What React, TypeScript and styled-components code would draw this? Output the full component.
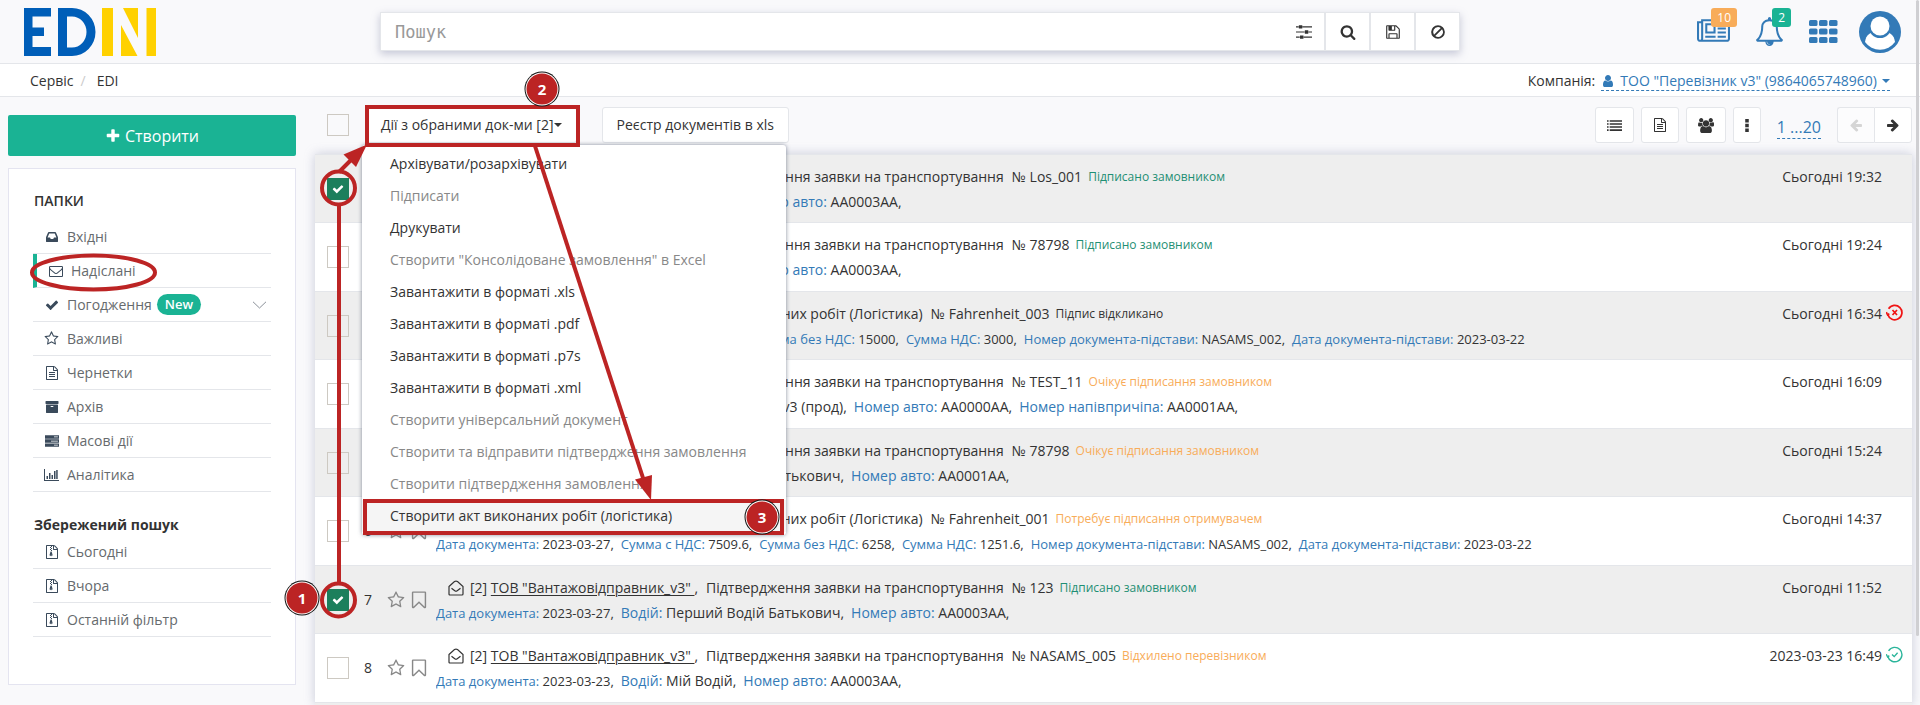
import React, { useState } from 'react';
import styled, { createGlobalStyle, css } from 'styled-components';

const color = {
  page: '#f9f9fb',
  line: '#e4e6ea',
  text: '#333333',
  muted: '#666a6d',
  icon: '#3a4a5b',
  link: '#337ab7',
  green: '#1ab394',
  greenText: '#1f8f74',
  orange: '#f8ac59',
  mark: '#bc2424',
};

const GlobalStyle = createGlobalStyle`
  *, *::before, *::after { box-sizing: border-box; }
  body {
    margin: 0;
    background: ${color.page};
    color: ${color.text};
    font: 14px/20px "Open Sans", "Noto Sans", sans-serif;
    overflow: hidden;
  }
  button, input { font: inherit; color: inherit; }
  button { cursor: pointer; }
  a { color: inherit; text-decoration: none; }
  ul { list-style: none; margin: 0; padding: 0; }
`;

/* ---------- icons ---------- */

const glyphs = {
  plus: 'M1600 736v192q0 40-28 68t-68 28h-416v416q0 40-28 68t-68 28h-192q-40 0-68-28t-28-68v-416h-416q-40 0-68-28t-28-68v-192q0-40 28-68t68-28h416v-416q0-40 28-68t68-28h192q40 0 68 28t28 68v416h416q40 0 68 28t28 68z',
  search: 'M1216 832q0-185-131.5-316.5t-316.5-131.5-316.5 131.5-131.5 316.5 131.5 316.5 316.5 131.5 316.5-131.5 131.5-316.5zm512 832q0 52-38 90t-90 38q-54 0-90-38l-343-342q-179 124-399 124-143 0-273.5-55.5t-225-150-150-225-55.5-273.5 55.5-273.5 150-225 225-150 273.5-55.5 273.5 55.5 225 150 150 225 55.5 273.5q0 220-124 399l343 343q37 37 37 90z',
  envelope: 'M1664 1504v-768q-32 36-69 66-268 206-426 338-51 43-83 67t-86.5 48.5-102.5 24.5h-2q-48 0-102.5-24.5t-86.5-48.5-83-67q-158-132-426-338-37-30-69-66v768q0 13 9.5 22.5t22.5 9.5h1472q13 0 22.5-9.5t9.5-22.5zm0-1051v-24.5l-.5-13-3-12.5-5.5-9-9-7.5-14-2.5h-1472q-13 0-22.5 9.5t-9.5 22.5q0 168 147 284 193 152 401 317 6 5 35 29.5t46 37.5 44.5 31.5 50.5 27.5 43 9h2q20 0 43-9t50.5-27.5 44.5-31.5 46-37.5 35-29.5q208-165 401-317 54-43 100.5-115.5t46.5-131.5zm128-37v1088q0 66-47 113t-113 47h-1472q-66 0-113-47t-47-113v-1088q0-66 47-113t113-47h1472q66 0 113 47t47 113z',
  check: 'M1671 566q0 40-28 68l-724 724-136 136q-28 28-68 28t-68-28l-136-136-362-362q-28-28-28-68t28-68l136-136q28-28 68-28t68 28l294 295 656-657q28-28 68-28t68 28l136 136q28 28 28 68z',
  star: 'M1201 1004l306-297-422-62-189-382-189 382-422 62 306 297-73 421 378-199 377 199zm527-357q0 22-26 48l-363 354 86 500q1 7 1 20 0 50-41 50-19 0-40-12l-449-236-449 236q-22 12-40 12-21 0-31.5-14.5t-10.5-35.5q0-6 2-20l86-500-364-354q-25-27-25-48 0-37 56-46l502-73 225-455q19-41 49-41t49 41l225 455 502 73q56 9 56 46z',
  file: 'M1596 380q28 28 48 76t20 88v1152q0 40-28 68t-68 28h-1344q-40 0-68-28t-28-68v-1600q0-40 28-68t68-28h896q40 0 88 20t76 48zm-444-244v376h376q-10-29-22-41l-313-313q-12-12-41-22zm384 1528v-1024h-416q-40 0-68-28t-28-68v-416h-768v1536h1280zm-1024-864q0-14 9-23t23-9h704q14 0 23 9t9 23v64q0 14-9 23t-23 9h-704q-14 0-23-9t-9-23v-64zm736 224q14 0 23 9t9 23v64q0 14-9 23t-23 9h-704q-14 0-23-9t-9-23v-64q0-14 9-23t23-9h704zm0 256q14 0 23 9t9 23v64q0 14-9 23t-23 9h-704q-14 0-23-9t-9-23v-64q0-14 9-23t23-9h704z',
  zip: 'M1596 380q28 28 48 76t20 88v1152q0 40-28 68t-68 28h-1344q-40 0-68-28t-28-68v-1600q0-40 28-68t68-28h896q40 0 88 20t76 48zm-444-244v376h376q-10-29-22-41l-313-313q-12-12-41-22zm384 1528v-1024h-416q-40 0-68-28t-28-68v-416h-128v128h-128v-128h-512v1536h1280zm-896-1408h128v128h-128zm128 128h128v128h-128zm-128 128h128v128h-128zm128 128h128v128h-128zm-60 192h136l120 400q10 36 10 62 0 130-198 130t-198-130q0-30 10-62zm68 400q-80 0-80 60t80 60 80-60-80-60z',
  archive: 'M1088 832q0-26-19-45t-45-19h-256q-26 0-45 19t-19 45 19 45 45 19h256q26 0 45-19t19-45zm576-192v960q0 26-19 45t-45 19h-1408q-26 0-45-19t-19-45v-960q0-26 19-45t45-19h1408q26 0 45 19t19 45zm64-448v256q0 26-19 45t-45 19h-1536q-26 0-45-19t-19-45v-256q0-26 19-45t45-19h1536q26 0 45 19t19 45z',
  inbox: 'M1151 960h316q-1-3-2.5-8.5t-2.5-7.5l-212-496h-708l-212 496q-1 2-2.5 7.5t-2.5 8.5h316l95 192h320zm513 30v482q0 26-19 45t-45 19h-1408q-26 0-45-19t-19-45v-482q0-62 25-123l238-552q10-25 36.5-42t52.5-17h832q26 0 52.5 17t36.5 42l238 552q25 61 25 123z',
  server: 'M0 160h1792v440h-1792zM1152 330v100h500v-100zM0 680h1792v440h-1792zM768 850v100h884v-100zM0 1200h1792v440h-1792zM1152 1370v100h500v-100z',
  chart: 'M0 128h128v1408h1792v128h-1920zM320 1024h192v384h-192zM640 640h192v768h-192zM960 896h192v512h-192zM1280 384h192v1024h-192zM1560 256h192v1152h-192z',
  arrow: 'M1600 960q0 54-37 91l-651 651q-39 37-91 37-51 0-90-37l-75-75q-38-38-38-91t38-91l293-293h-704q-52 0-84.5-37.5t-32.5-90.5v-128q0-53 32.5-90.5t84.5-37.5h704l-293-294q-38-36-38-90t38-90l75-75q38-38 90-38 53 0 91 38l651 651q37 35 37 90z',
  user: 'M1536 1399q0 109-62.5 187t-150.5 78h-854q-88 0-150.5-78t-62.5-187q0-85 8.5-160.5t31.5-152 58.5-131 94-89 134.5-34.5q131 128 313 128t313-128q76 0 134.5 34.5t94 89 58.5 131 31.5 152 8.5 160.5zm-256-887q0 159-112.5 271.5t-271.5 112.5-271.5-112.5-112.5-271.5 112.5-271.5 271.5-112.5 271.5 112.5 112.5 271.5z',
  users: 'M529 896q-162 5-265 128h-134q-82 0-138-40.5t-56-118.5q0-353 124-353 6 0 43.5 21t97.5 42.5 119 21.5q67 0 133-23-5 37-5 66 0 159 90 287zm1071 637q0 120-73 189.5t-194 69.5h-874q-121 0-194-69.5t-73-189.5q0-53 3.5-103.5t14-109 26.5-108.5 43-97.5 62-81 85.5-53.5 111.5-20q10 0 43 21.5t73 48 107 48 135 21.5 135-21.5 107-48 73-48 43-21.5q61 0 111.5 20t85.5 53.5 62 81 43 97.5 26.5 108.5 14 109 3.5 103.5zm-1024-1277q0 106-75 181t-181 75-181-75-75-181 75-181 181-75 181 75 75 181zm704 384q0 159-112.5 271.5t-271.5 112.5-271.5-112.5-112.5-271.5 112.5-271.5 271.5-112.5 271.5 112.5 112.5 271.5zm576 225q0 78-56 118.5t-138 40.5h-134q-103-123-265-128 90-128 90-287 0-29-5-66 66 23 133 23 59 0 119-21.5t97.5-42.5 43.5-21q124 0 124 353zm-128-609q0 106-75 181t-181 75-181-75-75-181 75-181 181-75 181 75 75 181z',
  bell: 'M912 1696q0-16-16-16-59 0-101.5-42.5t-42.5-101.5q0-16-16-16t-16 16q0 73 51.5 124.5t124.5 51.5q16 0 16-16zm-666-288h1300q-266-300-266-832 0-51-24-105t-69-103-121.5-80.5-169.5-31.5-169.5 31.5-121.5 80.5-69 103-24 105q0 532-266 832zm1482 0q0 52-38 90t-90 38h-448q0 106-75 181t-181 75-181-75-75-181h-448q-52 0-90-38t-38-90q50-42 91-88t85-119.5 74.5-158.5 50-206 19.5-260q0-152 117-282.5t307-158.5q-8-19-8-39 0-40 28-68t68-28 68 28 28 68q0 20-8 39 190 28 307 158.5t117 282.5q0 139 19.5 260t50 206 74.5 158.5 85 119.5 91 88z',
  news: 'M1024 512h-384v384h384v-384zm128 640v128h-640v-128h640zm0-768v640h-640v-640h640zm640 768v128h-512v-128h512zm0-256v128h-512v-128h512zm0-256v128h-512v-128h512zm0-256v128h-512v-128h512zm-1536 960v-960h-128v960q0 26 19 45t45 19 45-19 19-45zm1664 0v-1088h-1536v1088q0 33-11 64h1483q26 0 45-19t19-45zm128-1216v1216q0 80-56 136t-136 56h-1664q-80 0-136-56t-56-136v-1088h256v-128h1792z',
  save: 'M512 1536h768v-384h-768v384zm896 0h128v-896q0-14-10-38.5t-20-34.5l-281-281q-10-10-34-20t-39-10v416q0 40-28 68t-68 28h-576q-40 0-68-28t-28-68v-416h-128v1280h128v-416q0-40 28-68t68-28h832q40 0 68 28t28 68v416zm-384-928v-320q0-13-9.5-22.5t-22.5-9.5h-192q-13 0-22.5 9.5t-9.5 22.5v320q0 13 9.5 22.5t22.5 9.5h192q13 0 22.5-9.5t9.5-22.5zm640 32v928q0 40-28 68t-68 28h-1344q-40 0-68-28t-28-68v-1344q0-40 28-68t68-28h928q40 0 88 20t76 48l280 280q28 28 48 76t20 88z',
  bookmark: 'M1408 256h-1024v1242l423-406 89-85 89 85 423 406v-1242zm12-128q23 0 44 9 33 13 52.5 41t19.5 62v1289q0 34-19.5 62t-52.5 41q-19 8-44 8-48 0-83-32l-441-424-441 424q-36 33-83 33-23 0-44-9-33-13-52.5-41t-19.5-62v-1289q0-34 19.5-62t52.5-41q21-9 44-9h1048z',
  list: 'M0 256h192v192h-192zM320 256h1472v192h-1472zM0 620h192v192h-192zM320 620h1472v192h-1472zM0 984h192v192h-192zM320 984h1472v192h-1472zM0 1348h192v192h-192zM320 1348h1472v192h-1472z',
  dots: 'M704 192h384v384h-384zM704 704h384v384h-384zM704 1216h384v384h-384z',
  sliders: 'M0 260h300v128h-300zM720 260h1072v128h-1072zM320 130h384v384h-384zM0 832h960v128h-960zM1400 832h392v128h-392zM990 704h384v384h-384zM0 1404h420v128h-420zM860 1404h932v128h-932zM450 1276h384v384h-384z',
  ban: 'M896 128a768 768 0 1 0 0 1536a768 768 0 1 0 0-1536zM896 348a548 548 0 0 1 310 96l-762 762a548 548 0 0 1 452-858zM1348 588a548 548 0 0 1-762 762z',
};

type Glyph = keyof typeof glyphs;
const wide: Partial<Record<Glyph, string>> = {
  news: '0 0 2048 1792',
  users: '-64 0 1920 1792',
  chart: '0 0 1920 1792',
};

const Svg = styled.svg<{ $w: number; $h?: number }>`
  width: ${(p) => p.$w}px;
  height: ${(p) => p.$h ?? p.$w}px;
  flex: none;
  display: block;
  fill: currentColor;
`;

const Icon = ({ name, size = 14 }: { name: Glyph; size?: number }) => {
  const box = wide[name] ?? '0 0 1792 1792';
  const width = Math.round((size * Number(box.split(' ')[2])) / 1792);
  return (
    <Svg $w={width} $h={size} viewBox={box} aria-hidden="true">
      <path fillRule="evenodd" d={glyphs[name]} />
    </Svg>
  );
};

const ArrowLeft = styled.span`
  display: block;
  transform: scaleX(-1);
`;

const Caret = styled.span`
  display: inline-block;
  border: 4px solid transparent;
  border-top-color: currentColor;
  border-bottom: 0;
`;

const Logo = () => (
  <Svg $w={132} $h={48} viewBox="0 0 132 48" role="img" aria-label="EDIN">
    <g fill="#005eb8">
      <path d="M0 0h27v8.500H8.500v11H20v8.500H8.500V39H27v9H0z" />
      <path fillRule="evenodd" d="M34 0h14a23.500 24 0 0 1 0 48H34zM43 8.500v31h5a14.500 15.500 0 0 0 0-31z" />
    </g>
    <g fill="#ffd100">
      <path d="M78 0h11v48H78zM99 0h15v30zM97 17l16.500 31H97zM122.500 0H132v48h-9.500z" />
    </g>
  </Svg>
);

const AppsIcon = () => (
  <Svg $w={29} $h={23} viewBox="0 0 29 23" aria-hidden="true">
    {[0, 8.500, 17].map((y) => [0, 10, 20].map((x) => <rect key={`${x}-${y}`} x={x} y={y} width="8.500" height="6" rx="1.500" />))}
  </Svg>
);

const Avatar = () => (
  <Svg $w={42} viewBox="0 0 42 42" aria-hidden="true">
    <circle cx="21" cy="21" r="21" />
    <path d="M6 31C7 24 11 20 21 20S35 24 36 31A18.500 18.500 0 0 1 6 31z" fill="#fff" />
    <circle cx="21" cy="15.500" r="11.500" />
    <circle cx="21" cy="15" r="9.500" fill="#fff" />
  </Svg>
);

const OpenEnvelope = () => (
  <Svg $w={16} viewBox="0 0 16 16" aria-hidden="true">
    <path d="M1 6.500L6.500 1.600Q8 .6 9.500 1.600L15 6.500V14q0 1-1 1H2q-1 0-1-1zM3.500 8.200L6.800 10.800Q8 11.600 9.200 10.800L12.500 8.200" fill="none" stroke="currentColor" strokeWidth="1.200" />
  </Svg>
);

const StateIcon = ({ ok }: { ok: boolean }) => (
  <Svg $w={17} viewBox="0 0 17 17" role="img" aria-label={ok ? 'Прийнято' : 'Відхилено'}>
    <g fill="none" stroke={ok ? '#2bb59b' : '#f01414'} strokeWidth={ok ? 1.4 : 1.7}>
      <path d="M1.800 10.500A7.200 7.200 0 1 0 2.600 4.800" />
      <path d="M.3 8.200L1.600 11L3.300 9.600" />
      <path d={ok ? 'M6 8.500L8.200 10.600L11.600 6.800' : 'M6.500 6L11 11M11 6L6.500 11'} />
    </g>
  </Svg>
);

/* ---------- header ---------- */

const Page = styled.div`
  position: relative;
  display: flex;
  flex-direction: column;
  height: 100vh;
  overflow: hidden;
`;

const Header = styled.header`
  display: grid;
  grid-template-columns: 356px 1fr 460px;
  align-items: center;
  height: 64px;
  padding-left: 24px;
  border-bottom: 1px solid ${color.line};
`;

const SearchBar = styled.form`
  display: flex;
  height: 39px;
  background: #fff;
  border: 1px solid ${color.line};
  box-shadow: 0 3px 8px rgba(120, 125, 160, 0.4);
`;

const SearchInput = styled.input`
  flex: 1;
  min-width: 0;
  padding: 0 14px;
  border: 0;
  outline: 0;
  background: none;
  font: 17px/24px "DejaVu Sans Mono", monospace;
  &::placeholder { color: #999; opacity: 1; }
`;

const SearchButton = styled.button<{ $divided?: boolean }>`
  display: grid;
  place-items: center;
  width: ${(p) => (p.$divided ? 45 : 40)}px;
  padding: 0;
  border: 0;
  border-left: ${(p) => (p.$divided ? `2px solid ${color.line}` : '0')};
  background: none;
`;

const HeaderTools = styled.div`
  display: flex;
  justify-content: flex-end;
  align-items: center;
  height: 63px;
  padding-right: 19px;
  color: ${color.link};
`;

const ToolButton = styled.button<{ $gap: number }>`
  position: relative;
  padding: 0;
  border: 0;
  margin-left: ${(p) => p.$gap}px;
  background: none;
  color: inherit;
`;

const Count = styled.span<{ $tone: string }>`
  position: absolute;
  top: -9px;
  right: -7px;
  padding: 0 6px;
  border-radius: 3px;
  background: ${(p) => p.$tone};
  color: #fff;
  font-size: 12px;
  line-height: 19px;
`;

const TopBar = styled.div`
  display: flex;
  align-items: center;
  justify-content: space-between;
  height: 33px;
  padding: 2px 30px 0;
  background: #fff;
  border-bottom: 1px solid ${color.line};
`;

const Crumbs = styled.nav`
  display: flex;
  gap: 7px;
  a + span { color: #ccc; padding-right: 4px; }
`;

const Company = styled.div`
  display: flex;
  align-items: center;
  gap: 6px;
`;

const CompanyLink = styled.a`
  display: flex;
  align-items: center;
  gap: 5px;
  color: ${color.link};
  border-bottom: 1px dashed ${color.link};
  line-height: 18px;
`;

/* ---------- sidebar ---------- */

const Body = styled.div`
  display: flex;
  flex: 1;
  min-height: 0;
`;

const Sidebar = styled.aside`
  display: flex;
  flex-direction: column;
  gap: 12px;
  flex: none;
  width: 296px;
  padding: 18px 0 20px 8px;
`;

const CreateButton = styled.button`
  display: flex;
  align-items: center;
  justify-content: center;
  gap: 4px;
  height: 41px;
  border: 0;
  border-radius: 2px;
  background: ${color.green};
  color: #fff;
  font-size: 16px;
`;

const Panel = styled.section`
  flex: 1;
  padding: 22px 24px;
  background: #fff;
  border: 1px solid #e4e4f0;
`;

const Heading = styled.h2<{ $strong?: boolean }>`
  margin: ${(p) => (p.$strong ? '23px 0 0' : '0 0 9px')};
  padding-left: 1px;
  font-size: 14px;
  line-height: 20px;
  font-weight: ${(p) => (p.$strong ? 700 : 600)};
`;

const NavLink = styled.a<{ $active?: boolean }>`
  display: flex;
  align-items: center;
  height: 34px;
  padding-left: 8px;
  border-bottom: 1px solid ${color.line};
  border-left: ${(p) => (p.$active ? `4px solid ${color.green}` : '0')};
  color: ${color.muted};
`;

const NavIcon = styled.span`
  display: grid;
  place-items: center;
  width: 21px;
  margin-right: 5px;
  color: ${color.icon};
`;

const NewBadge = styled.span`
  margin-left: 5px;
  padding: 0 8px;
  border-radius: 11px;
  background: ${color.green};
  color: #fff;
  font-weight: 600;
  font-size: 13px;
  line-height: 21px;
`;

const Chevron = styled(Svg)`
  margin: 0 4px 0 auto;
`;

/* ---------- list ---------- */

const Main = styled.main`
  display: flex;
  flex-direction: column;
  flex: 1;
  min-width: 0;
  padding: 10px 8px 0 19px;
`;

const Toolbar = styled.div`
  display: flex;
  align-items: center;
  height: 36px;
  margin-bottom: 11px;
  padding-left: 12px;
`;

const boxed = css`
  display: flex;
  align-items: center;
  justify-content: center;
  height: 36px;
  border: 1px solid ${color.line};
  border-radius: 3px;
  background: #fff;
`;

const Button = styled.button<{ $icon?: boolean }>`
  ${boxed}
  padding: 0 ${(p) => (p.$icon ? 11 : 14)}px;
  white-space: nowrap;
`;

const MenuAnchor = styled.div`
  position: relative;
  margin: 0 25px 0 17px;
`;

const Menu = styled.ul`
  position: absolute;
  z-index: 2;
  top: 38px;
  left: -4px;
  width: 424px;
  padding: 3px 0;
  border-radius: 3px;
  background: #fff;
  box-shadow: 0 0 4px rgba(86, 96, 117, 0.7);
`;

const MenuItem = styled.button<{ $current?: boolean }>`
  display: block;
  width: 100%;
  height: 32px;
  padding: 0 28px;
  border: 0;
  background: ${(p) => (p.$current ? '#f5f5f5' : 'none')};
  text-align: left;
  &:disabled { color: #888; }
`;

const Actions = styled.div`
  display: flex;
  align-items: center;
  gap: 7px;
  margin-left: auto;
`;

const PageLink = styled.a`
  margin: 5px 9px 0 9px;
  color: ${color.link};
  border-bottom: 1px dashed ${color.link};
  font-size: 16px;
  line-height: 22px;
`;

const Pager = styled.div`
  display: flex;
  button:first-child { border-radius: 3px 0 0 3px; border-right: 0; }
  button:last-child { border-radius: 0 3px 3px 0; }
  button:disabled { color: #d5d5d5; background: #fcfcfd; }
`;

const TableWrap = styled.div`
  flex: 1;
  background: #eee;
  box-shadow: 0 0 10px rgba(130, 135, 170, 0.4);
`;

const Table = styled.table`
  width: 100%;
  table-layout: fixed;
  border-collapse: collapse;
  border-bottom: 1px solid ${color.line};
`;

const Row = styled.tr`
  height: 69px;
  background: #fff;
  &:nth-child(odd) { height: 68px; background: #eee; }
  td { padding: 0; border-top: 1px solid ${color.line}; }
`;

const Col = styled.col<{ $w?: number }>`
  width: ${(p) => (p.$w ? `${p.$w}px` : 'auto')};
`;

const CheckCell = styled.td`
  && { padding-left: 12px; }
`;

const Content = styled.td`
  vertical-align: top;
  white-space: nowrap;
  overflow: hidden;
`;

const Title = styled.div`
  display: flex;
  align-items: center;
  gap: 6px;
  height: 25px;
  margin-top: 9px;
  padding-left: 12px;
`;

const Subject = styled.span`
  display: flex;
  gap: 8px;
`;

const Sender = styled.span`
  white-space: pre;
`;

const Partner = styled.a`
  text-decoration: underline;
  text-underline-offset: 2px;
`;

const Status = styled.span<{ $tone: string }>`
  color: ${(p) => p.$tone};
  font-size: 12px;
`;

const Fields = styled.div`
  display: flex;
  align-items: center;
  gap: 7px;
  height: 25px;
`;

const Field = styled.span<{ $small?: boolean }>`
  font-size: ${(p) => (p.$small ? 13 : 14)}px;
  white-space: pre;
  b { font-weight: 400; color: ${color.link}; }
`;

const Marks = styled.div`
  display: flex;
  align-items: center;
  gap: 4px;
  color: #888;
`;

const MarkButton = styled.button`
  padding: 0;
  border: 0;
  background: none;
  color: inherit;
`;

const DateCell = styled.td`
  vertical-align: top;
  text-align: right;
  white-space: nowrap;
  div { line-height: 25px; padding: 9px 30px 0 0; position: relative; }
  svg { position: absolute; right: 9px; top: 12px; }
`;

const CheckLabel = styled.label`
  position: relative;
  display: block;
  width: 22px;
  height: 22px;
  input {
    appearance: none;
    display: block;
    width: 22px;
    height: 22px;
    margin: 0;
    border: 1px solid #cdc9c2;
  }
  input:checked { background: #1c7f5c; border-color: #1c7f5c; }
  svg { position: absolute; top: 5px; left: 5px; color: #fff; pointer-events: none; }
`;

const Checkbox = ({ label, initial = false }: { label: string; initial?: boolean }) => {
  const [on, setOn] = useState(initial);
  return (
    <CheckLabel>
      <input type="checkbox" aria-label={label} checked={on} onChange={() => setOn(!on)} />
      {on && <Icon name="check" size={12} />}
    </CheckLabel>
  );
};

/* ---------- callouts over the page ---------- */

const Overlay = styled.svg`
  position: absolute;
  z-index: 3;
  top: 0;
  left: 0;
  width: 800px;
  height: 705px;
  pointer-events: none;
  fill: none;
  stroke: ${color.mark};
  stroke-width: 4;
  text {
    fill: #fff;
    stroke: none;
    font: 700 15px "Open Sans", sans-serif;
    text-anchor: middle;
  }
`;

const Step = ({ x, y, n }: { x: number; y: number; n: number }) => (
  <g>
    <circle cx={x} cy={y} r="17.500" fill="#111" stroke="none" />
    <circle cx={x} cy={y} r="16.500" fill="#fff" stroke="none" />
    <circle cx={x} cy={y} r="15.500" fill={color.mark} stroke="none" />
    <text x={x} y={y + 6}>{n}</text>
  </g>
);

const Callouts = () => (
  <Overlay viewBox="0 0 800 705">
    <ellipse cx="93.500" cy="272.500" rx="61.500" ry="17" />
    <circle cx="338.500" cy="188" r="16.500" />
    <circle cx="338.500" cy="600" r="16.500" />
    <path d="M339 205V583M339 172L352 159" />
    <path d="M367 144.500L343.500 154.500L356 167z" fill={color.mark} stroke="none" />
    <path d="M535 146L644 481" />
    <path d="M651 500L635 479.500L652 475z" fill={color.mark} stroke="none" />
    <rect x="367" y="107" width="211" height="38" />
    <rect x="365" y="501" width="417" height="32" />
    <Step x={302} y={598} n={1} />
    <Step x={542} y={89} n={2} />
    <Step x={762} y={517} n={3} />
  </Overlay>
);

const ScrollThumb = styled.div`
  position: absolute;
  top: 0;
  right: 1px;
  width: 3px;
  height: 636px;
  border-radius: 2px;
  background: #cfcfd2;
`;

/* ---------- data ---------- */

const folders: { icon: Glyph; label: string; active?: boolean; fresh?: boolean }[] = [
  { icon: 'inbox', label: 'Вхідні' },
  { icon: 'envelope', label: 'Надіслані', active: true },
  { icon: 'check', label: 'Погодження', fresh: true },
  { icon: 'star', label: 'Важливі' },
  { icon: 'file', label: 'Чернетки' },
  { icon: 'archive', label: 'Архів' },
  { icon: 'server', label: 'Масові дії' },
  { icon: 'chart', label: 'Аналітика' },
];

const saved = ['Сьогодні', 'Вчора', 'Останній фільтр'];

const menu: [string, boolean][] = [
  ['Архівувати/розархівувати', true],
  ['Підписати', false],
  ['Друкувати', true],
  ['Створити "Консолідоване замовлення" в Excel', false],
  ['Завантажити в форматі .xls', true],
  ['Завантажити в форматі .pdf', true],
  ['Завантажити в форматі .p7s', true],
  ['Завантажити в форматі .xml', true],
  ['Створити універсальний документ', false],
  ['Створити та відправити підтвердження замовлення', false],
  ['Створити підтвердження замовлення', false],
  ['Створити акт виконаних робіт (логістика)', true],
];

const order = 'Підтвердження заявки на транспортування';
const act = 'Акт виконаних робіт (Логістика)';
type F = [string, string];
const trip = (date: string, driver: string, ...rest: F[]): F[] => [['Дата документа', date], ['Водій', driver], ...rest];
const sums = (total: string, net: string, tax: string): F[] => [
  ['Дата документа', '2023-03-27'],
  ['Сумма с НДС', total],
  ['Сумма без НДС', net],
  ['Сумма НДС', tax],
  ['Номер документа-підстави', 'NASAMS_002'],
  ['Дата документа-підстави', '2023-03-22'],
];

type Doc = {
  kind: string;
  number: string;
  status: string;
  tone: string;
  fields: F[];
  date: string;
  checked?: boolean;
  small?: boolean;
  ok?: boolean;
};

const docs: Doc[] = [
  { kind: order, number: 'Los_001', status: 'Підписано замовником', tone: color.greenText, fields: trip('2023-03-27', 'Мій Водій', ['Номер авто', 'AA0003AA']), date: 'Сьогодні 19:32', checked: true },
  { kind: order, number: '78798', status: 'Підписано замовником', tone: color.greenText, fields: trip('2023-03-27', 'Мій Водій', ['Номер авто', 'AA0003AA']), date: 'Сьогодні 19:24' },
  { kind: act, number: 'Fahrenheit_003', status: 'Підпис відкликано', tone: color.text, fields: sums('18000', '15000', '3000'), date: 'Сьогодні 16:34', small: true, ok: false },
  { kind: order, number: 'TEST_11', status: 'Очікує підписання замовником', tone: color.orange, fields: trip('2023-03-27', 'Тестовий водійс_v3 (прод)', ['Номер авто', 'АА0000АА'], ['Номер напівпричіпа', 'АА0001АА']), date: 'Сьогодні 16:09' },
  { kind: order, number: '78798', status: 'Очікує підписання замовником', tone: color.orange, fields: trip('2023-03-27', 'Перший Водій Батькович', ['Номер авто', 'АА0001АА']), date: 'Сьогодні 15:24' },
  { kind: act, number: 'Fahrenheit_001', status: 'Потребує підписання отримувачем', tone: color.orange, fields: sums('7509.6', '6258', '1251.6'), date: 'Сьогодні 14:37', small: true },
  { kind: order, number: '123', status: 'Підписано замовником', tone: color.greenText, fields: trip('2023-03-27', 'Перший Водій Батькович', ['Номер авто', 'AA0003AA']), date: 'Сьогодні 11:52', checked: true },
  { kind: order, number: 'NASAMS_005', status: 'Відхилено перевізником', tone: color.orange, fields: trip('2023-03-23', 'Мій Водій', ['Номер авто', 'AA0003AA']), date: '2023-03-23 16:49', ok: true },
];

export default function App() {
  return (
    <Page>
      <GlobalStyle />
      <Header>
        <a href="#home"><Logo /></a>
        <SearchBar role="search">
          <SearchInput aria-label="Пошук" placeholder="Пошук" />
          <SearchButton type="button" aria-label="Параметри"><Icon name="sliders" size={16} /></SearchButton>
          <SearchButton type="button" $divided aria-label="Знайти"><Icon name="search" size={16} /></SearchButton>
          <SearchButton type="button" $divided aria-label="Зберегти"><Icon name="save" size={16} /></SearchButton>
          <SearchButton type="button" $divided aria-label="Очистити"><Icon name="ban" size={16} /></SearchButton>
        </SearchBar>
        <HeaderTools>
          <ToolButton $gap={0} aria-label="Новини"><Icon name="news" size={29} /><Count $tone={color.orange}>10</Count></ToolButton>
          <ToolButton $gap={25} aria-label="Сповіщення"><Icon name="bell" size={29} /><Count $tone={color.green}>2</Count></ToolButton>
          <ToolButton $gap={25} aria-label="Сервіси"><AppsIcon /></ToolButton>
          <ToolButton $gap={21} aria-label="Профіль"><Avatar /></ToolButton>
        </HeaderTools>
      </Header>

      <TopBar>
        <Crumbs>
          <a href="#service">Сервіс</a><span>/</span><a href="#edi">EDI</a>
        </Crumbs>
        <Company>
          Компанія:
          <CompanyLink href="#company">
            <Icon name="user" size={14} />ТОО "Перевізник v3" (9864065748960)<Caret />
          </CompanyLink>
        </Company>
      </TopBar>

      <Body>
        <Sidebar>
          <CreateButton><Icon name="plus" size={16} />Створити</CreateButton>
          <Panel>
            <Heading>ПАПКИ</Heading>
            <ul>
              {folders.map((f) => (
                <li key={f.label}>
                  <NavLink href="#folder" $active={f.active}>
                    <NavIcon><Icon name={f.icon} size={f.icon === 'star' ? 15 : 14} /></NavIcon>
                    {f.label}
                    {f.fresh && <NewBadge>New</NewBadge>}
                    {f.fresh && (
                      <Chevron $w={15} $h={8} viewBox="0 0 15 8" aria-hidden="true">
                        <path d="M1 .8L7.500 7L14 .8" fill="none" stroke="#8a9099" />
                      </Chevron>
                    )}
                  </NavLink>
                </li>
              ))}
            </ul>
            <Heading $strong>Збережений пошук</Heading>
            <ul>
              {saved.map((s) => (
                <li key={s}>
                  <NavLink href="#saved"><NavIcon><Icon name="zip" /></NavIcon>{s}</NavLink>
                </li>
              ))}
            </ul>
          </Panel>
        </Sidebar>

        <Main>
          <Toolbar>
            <Checkbox label="Обрати всі" />
            <MenuAnchor>
              <Button aria-haspopup="menu" aria-expanded="true">Дії з обраними док-ми [2]<Caret /></Button>
              <Menu>
                {menu.map(([label, enabled], i) => (
                  <li key={label}>
                    <MenuItem disabled={!enabled} $current={i === menu.length - 1}>{label}</MenuItem>
                  </li>
                ))}
              </Menu>
            </MenuAnchor>
            <Button>Реєстр документів в xls</Button>
            <Actions>
              <Button $icon aria-label="Список"><Icon name="list" size={15} /></Button>
              <Button $icon aria-label="Документ"><Icon name="file" /></Button>
              <Button $icon aria-label="Користувачі"><Icon name="users" size={15} /></Button>
              <Button $icon aria-label="Ще"><Svg $w={4} $h={13} viewBox="704 192 384 1408"><path d={glyphs.dots} /></Svg></Button>
              <PageLink href="#pages">1 ...20</PageLink>
              <Pager>
                <Button $icon disabled aria-label="Попередня"><ArrowLeft><Icon name="arrow" /></ArrowLeft></Button>
                <Button $icon aria-label="Наступна"><Icon name="arrow" /></Button>
              </Pager>
            </Actions>
          </Toolbar>

          <TableWrap>
            <Table>
              <colgroup>
                <Col $w={49} /><Col $w={23} /><Col $w={49} /><Col /><Col $w={180} />
              </colgroup>
              <tbody>
                {docs.map((d, i) => (
                  <Row key={i}>
                    <CheckCell><Checkbox label={`Документ ${i + 1}`} initial={d.checked} /></CheckCell>
                    <td>{i + 1}</td>
                    <td>
                      <Marks>
                        <MarkButton aria-label="Важливе"><Icon name="star" size={18} /></MarkButton>
                        <MarkButton aria-label="Закладка"><Icon name="bookmark" size={20} /></MarkButton>
                      </Marks>
                    </td>
                    <Content>
                      <Title>
                        <OpenEnvelope />
                        <Subject>
                          <Sender>[2] <Partner href="#partner">ТОВ "Вантажовідправник_v3" </Partner>,</Sender>
                          <span>{d.kind}</span>
                          <span>№ {d.number}</span>
                        </Subject>
                        <Status $tone={d.tone}>{d.status}</Status>
                      </Title>
                      <Fields>
                        {d.fields.map(([name, value], k) => (
                          <Field key={name} $small={d.small || k === 0}>
                            <b>{name}:</b> {value}{d.small && k === d.fields.length - 1 ? '' : ','}
                          </Field>
                        ))}
                      </Fields>
                    </Content>
                    <DateCell><div>{d.date}{d.ok !== undefined && <StateIcon ok={d.ok} />}</div></DateCell>
                  </Row>
                ))}
              </tbody>
            </Table>
          </TableWrap>
        </Main>
      </Body>
      <Callouts />
      <ScrollThumb />
    </Page>
  );
}
